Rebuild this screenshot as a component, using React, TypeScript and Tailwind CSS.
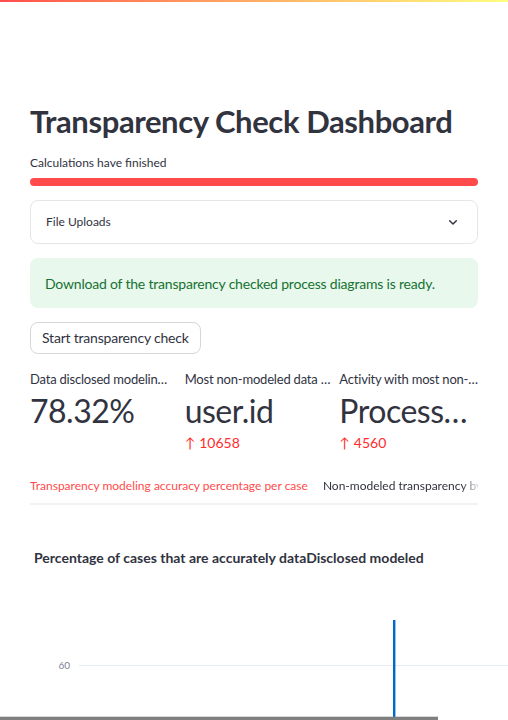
import React from "react";

const FONT = { fontFamily: "Lato, 'Noto Sans', sans-serif" };

function ChevronDown() {
  return (
    <svg width="16" height="16" viewBox="0 0 24 24" fill="none">
      <path d="M7 10l5 5 5-5" stroke="#31333f" strokeWidth="2.2" strokeLinecap="round" strokeLinejoin="round" />
    </svg>
  );
}

interface MetricProps {
  label: string;
  value: string;
  delta?: string;
}

function Metric({ label, value, delta }: MetricProps) {
  return (
    <div className="flex min-w-0 flex-1 flex-col">
      <div className="h-5 whitespace-nowrap text-[13px] leading-5 tracking-[-0.2px] text-[#31333f]">{label}</div>
      <div className="h-11 whitespace-nowrap text-[32px] leading-[44px] tracking-[-0.5px] text-[#31333f]">{value}</div>
      {delta && (
        <div className="flex h-5 items-center gap-1 text-[14px] leading-5 text-[#ff2b2b]">
          <span>↑</span>
          <span>{delta}</span>
        </div>
      )}
    </div>
  );
}

export default function App() {
  return (
    <div className="min-h-[720px] overflow-hidden bg-white text-[#31333f]" style={FONT}>
      {/* Decoration bar */}
      <div className="h-[2px] bg-gradient-to-r from-[#ff4b4b] to-[#fffd80]" />

      <div className="flex flex-col px-[30px]">
        <h1 className="mt-[95px] h-12 text-[31px] font-bold leading-[48px] tracking-[-0.4px] text-[#31333f]">
          Transparency Check Dashboard
        </h1>

        {/* Progress */}
        <div className="mt-[8px] h-5 text-[12px] leading-5">Calculations have finished</div>
        <div className="mt-[5px] h-2 w-full rounded-full bg-[#ff4b4b]" />

        {/* Expander */}
        <div className="mt-[14px] flex h-11 items-center justify-between rounded-lg border border-[#e6e6e8] pl-[15px] pr-[16px]">
          <span className="text-[12px]">File Uploads</span>
          <ChevronDown />
        </div>

        {/* Success alert */}
        <div className="mt-[14px] flex h-[50px] items-center whitespace-nowrap rounded-lg bg-[#e8f8ec] px-[15px] text-[14px] tracking-[-0.2px] text-[#177233]">
          Download of the transparency checked process diagrams is ready.
        </div>

        {/* Button */}
        <div className="mt-[14px]">
          <button className="h-8 rounded-lg border border-[#d6d6d9] bg-white px-[11px] text-[14px] leading-none tracking-[-0.2px] text-[#31333f]">
            Start transparency check
          </button>
        </div>

        {/* Metrics */}
        <div className="mt-[15px] flex gap-4">
          <Metric label="Data disclosed modelin…" value="78.32%" />
          <Metric label="Most non-modeled data …" value="user.id" delta="10658" />
          <Metric label="Activity with most non-…" value="Process…" delta="4560" />
        </div>

        {/* Tabs */}
        <div className="mt-[19px] flex overflow-hidden border-b-2 border-[#f0f2f6] text-[12px]">
          <div className="-mb-[2px] shrink-0 whitespace-nowrap border-b-2 border-[#ff4b4b] pb-[7px] pt-[4px] leading-5 text-[#ff4b4b]">
            Transparency modeling accuracy percentage per case
          </div>
          <div className="shrink-0 whitespace-nowrap pl-[15px] pt-[4px] leading-5 text-[#31333f] [mask-image:linear-gradient(to_right,black_88%,transparent)]">
            Non-modeled transparency by
          </div>
        </div>

        {/* Chart */}
        <div className="-mx-[30px] mt-[43px] flex flex-col">
          <div className="h-5 pl-[34px] text-[14px] font-bold leading-5 text-[#31333f]">
            Percentage of cases that are accurately dataDisclosed modeled
          </div>
          <svg width="508" height="152" viewBox="0 0 508 152" className="block">
            <line x1="79" y1="97.5" x2="508" y2="97.5" stroke="#e6eaf1" strokeWidth="1" />
            <text x="70" y="101" textAnchor="end" fontSize="10" fill="#808495" style={FONT}>
              60
            </text>
            <text x="42" y="156" textAnchor="end" fontSize="10" fill="#808495" style={FONT}>
              40
            </text>
            <rect x="393" y="52" width="2.4" height="100" fill="#0068c9" />
            <rect x="0" y="148.7" width="438" height="3.3" fill="#7f7f7f" />
          </svg>
        </div>
      </div>
    </div>
  );
}
